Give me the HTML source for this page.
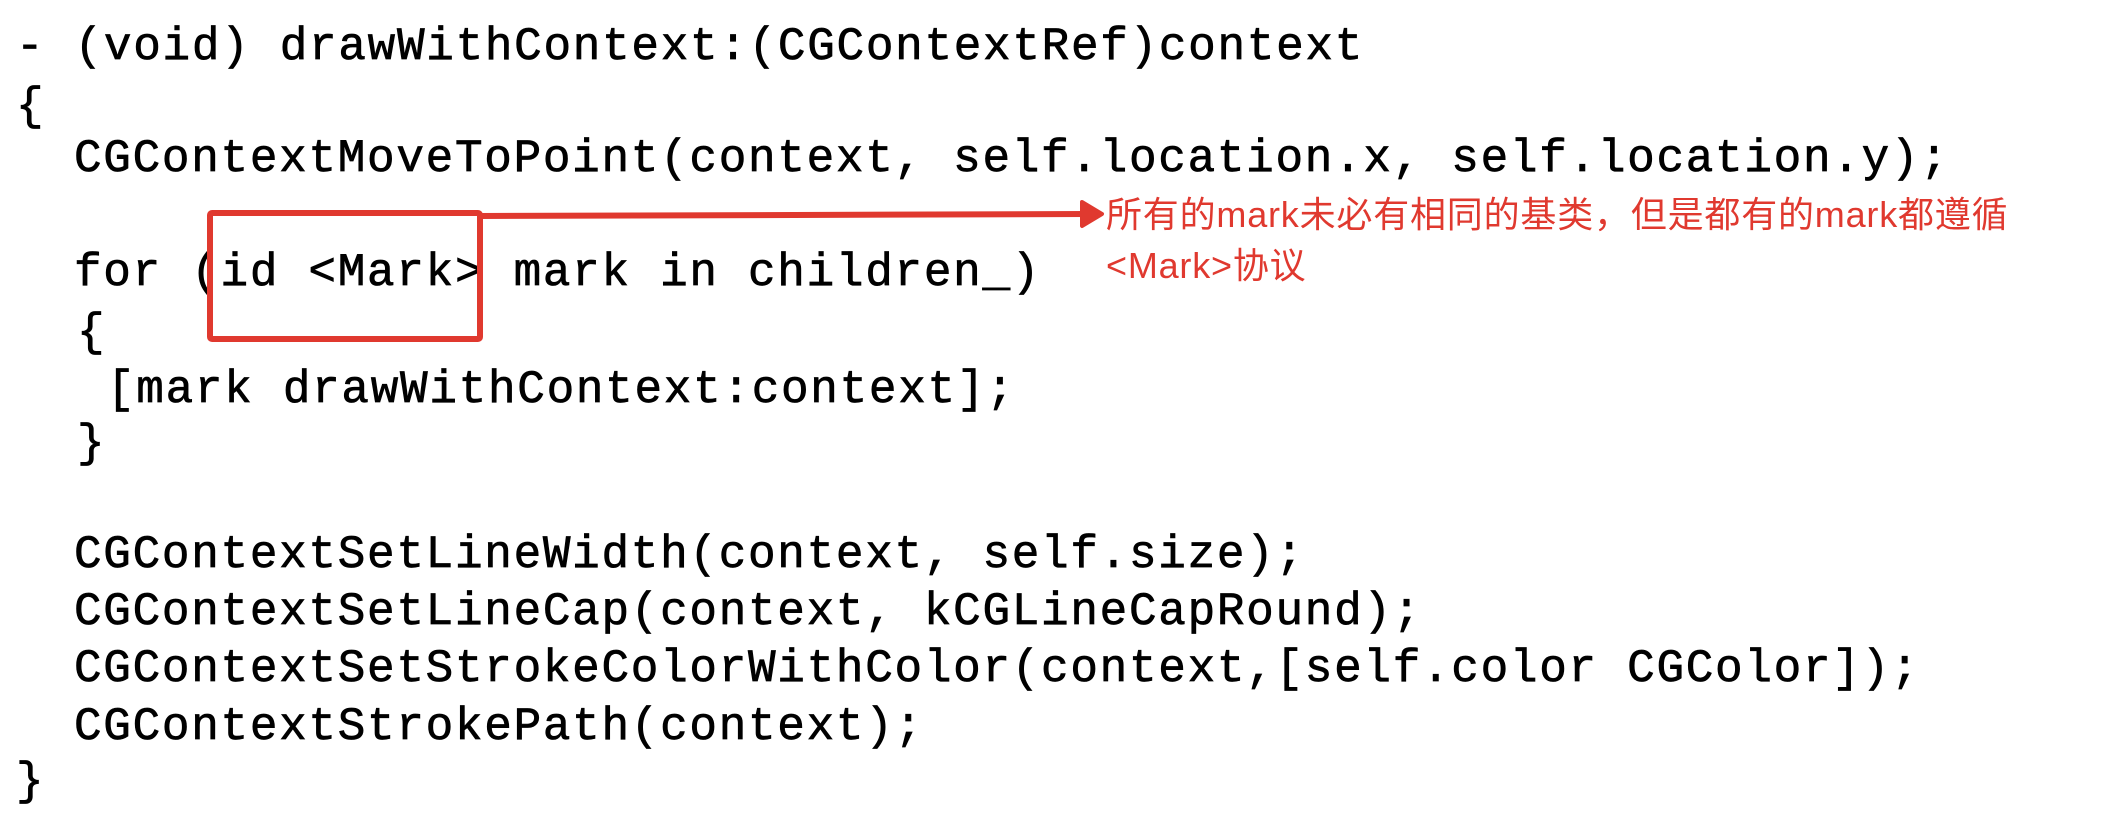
<!DOCTYPE html>
<html><head><meta charset="utf-8"><style>
body{margin:0;width:2108px;height:818px;background:#fff;position:relative;overflow:hidden}
.c{position:absolute;font-family:"Liberation Mono",monospace;font-size:46px;letter-spacing:1.7px;line-height:1;color:#000;white-space:pre;-webkit-text-stroke:0.7px #000}
.r{position:absolute;font-family:"Liberation Sans","Noto Sans CJK SC",sans-serif;font-size:36px;color:#e0392f;white-space:pre;line-height:1;letter-spacing:0.8px}
</style></head><body>
<div class="c" style="left:16px;top:24px">- (void) drawWithContext:(CGContextRef)context</div>
<div class="c" style="left:16px;top:84px">{</div>
<div class="c" style="left:74px;top:136px">CGContextMoveToPoint(context, self.location.x, self.location.y);</div>
<div class="c" style="left:74px;top:250px">for (id &lt;Mark&gt; mark in children_)</div>
<div class="c" style="left:77px;top:310px">{</div>
<div class="c" style="left:107px;top:367px">[mark drawWithContext:context];</div>
<div class="c" style="left:77px;top:421px">}</div>
<div class="c" style="left:74px;top:532px">CGContextSetLineWidth(context, self.size);</div>
<div class="c" style="left:74px;top:589px">CGContextSetLineCap(context, kCGLineCapRound);</div>
<div class="c" style="left:74px;top:646px">CGContextSetStrokeColorWithColor(context,[self.color CGColor]);</div>
<div class="c" style="left:74px;top:704px">CGContextStrokePath(context);</div>
<div class="c" style="left:16px;top:759px">}</div>
<svg style="position:absolute;left:0;top:0" width="2108" height="818">
<rect x="210" y="213" width="270" height="126" fill="none" stroke="#e0392f" stroke-width="6" rx="2"/>
<line x1="480" y1="216" x2="1088" y2="214" stroke="#e0392f" stroke-width="6"/>
<path d="M1082 202 L1102 214 L1082 226 Z" fill="#e0392f" stroke="#e0392f" stroke-width="4" stroke-linejoin="round"/>
</svg>
<div class="r" style="left:1106px;top:197px">所有的mark未必有相同的基类，但是都有的mark都遵循</div>
<div class="r" style="left:1106px;top:248px">&lt;Mark&gt;协议</div>
</body></html>
